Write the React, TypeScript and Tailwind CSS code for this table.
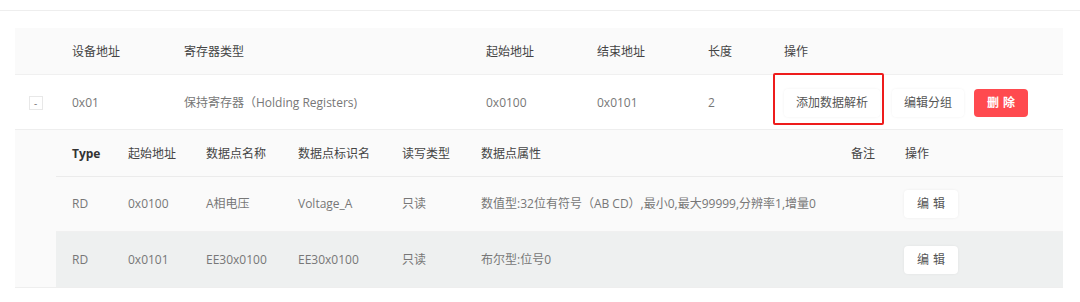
import React from "react";

const font = { fontFamily: '"Open Sans", "Noto Sans CJK SC", sans-serif' };

const points = [
  {
    type: "RD",
    start: "0x0100",
    name: "A相电压",
    key: "Voltage_A",
    rw: "只读",
    attr: "数值型:32位有符号（AB CD）,最小0,最大99999,分辨率1,增量0",
    note: "",
  },
  {
    type: "RD",
    start: "0x0101",
    name: "EE30x0100",
    key: "EE30x0100",
    rw: "只读",
    attr: "布尔型:位号0",
    note: "",
  },
];

const outerCols = "grid grid-cols-[41px_112px_302px_111px_111px_76px_1fr]";
const innerCols = "grid grid-cols-[56px_78px_92px_104px_79px_370px_54px_1fr]";

function PlainButton({ children, wide }: { children: React.ReactNode; wide?: boolean }) {
  return (
    <button
      className={`h-[28px] rounded-[4px] bg-white text-[12px] text-[#555] shadow-[0_0_3px_rgba(0,0,0,0.06)] ${
        wide ? "px-3" : "pl-[13px] pr-[9px] tracking-[4px]"
      }`}
    >
      {children}
    </button>
  );
}

export default function App() {
  return (
    <div className="min-h-[302px] bg-white text-[12px]" style={font}>
      <div className="h-[11px] border-b border-[#eeeeee]" />

      <div className="ml-[15px] mr-[17px] mt-[17px]">
        {/* group header */}
        <div className={`${outerCols} h-[47px] items-center border-b border-[#f0f0f0] bg-[#fafafa] pt-[2px] text-[#444]`}>
          <div />
          <div className="pl-4">设备地址</div>
          <div className="pl-4">寄存器类型</div>
          <div className="pl-4">起始地址</div>
          <div className="pl-4">结束地址</div>
          <div className="pl-4">长度</div>
          <div className="pl-4">操作</div>
        </div>

        {/* group row */}
        <div className={`${outerCols} h-[55px] items-center border-b border-[#eeeeee] pt-[2px] text-[#777]`}>
          <div className="flex justify-center">
            <span className="flex h-[14px] w-[14px] items-center justify-center border border-[#e8e8e8] bg-white text-[10px] leading-none text-[#777]">
              -
            </span>
          </div>
          <div className="pl-4">0x01</div>
          <div className="pl-4">保持寄存器（Holding Registers)</div>
          <div className="pl-4">0x0100</div>
          <div className="pl-4">0x0101</div>
          <div className="pl-4">2</div>
          <div className="flex items-center pl-4">
            <div className="relative">
              <PlainButton wide>添加数据解析</PlainButton>
              <div className="pointer-events-none absolute -left-[11px] -right-[4px] -top-[16px] -bottom-[8px] rounded-[2px] border-2 border-[#ee1c1c]" />
            </div>
            <div className="ml-3">
              <PlainButton wide>编辑分组</PlainButton>
            </div>
            <button className="ml-[10px] h-[28px] w-[54px] rounded-[4px] bg-[#ff4a4f] pl-[4px] text-[12px] font-bold tracking-[4px] text-white">
              删除
            </button>
          </div>
        </div>

        {/* expanded data points */}
        <div className="border-b border-[#eeeeee] bg-[#fafafa] pl-[41px]">
          <div className={`${innerCols} h-[47px] items-center border-b border-[#ebebeb] pt-[1px] text-[#444]`}>
            <div className="pl-4 font-bold text-[#333]">Type</div>
            <div className="pl-4">起始地址</div>
            <div className="pl-4">数据点名称</div>
            <div className="pl-4">数据点标识名</div>
            <div className="pl-4">读写类型</div>
            <div className="pl-4">数据点属性</div>
            <div className="pl-4">备注</div>
            <div className="pl-4">操作</div>
          </div>
          {points.map((p, i) => (
            <div
              key={i}
              className={`${innerCols} h-[55px] items-center text-[#777] ${
                i === 1 ? "bg-[#eef0f0]" : "border-b border-[#f0f0f0]"
              }`}
            >
              <div className="pl-4">{p.type}</div>
              <div className="pl-4">{p.start}</div>
              <div className="pl-4">{p.name}</div>
              <div className="pl-4">{p.key}</div>
              <div className="pl-4">{p.rw}</div>
              <div className="pl-4 whitespace-nowrap">{p.attr}</div>
              <div className="pl-4">{p.note}</div>
              <div className="pl-[15px]">
                <PlainButton>编辑</PlainButton>
              </div>
            </div>
          ))}
        </div>
      </div>
    </div>
  );
}
